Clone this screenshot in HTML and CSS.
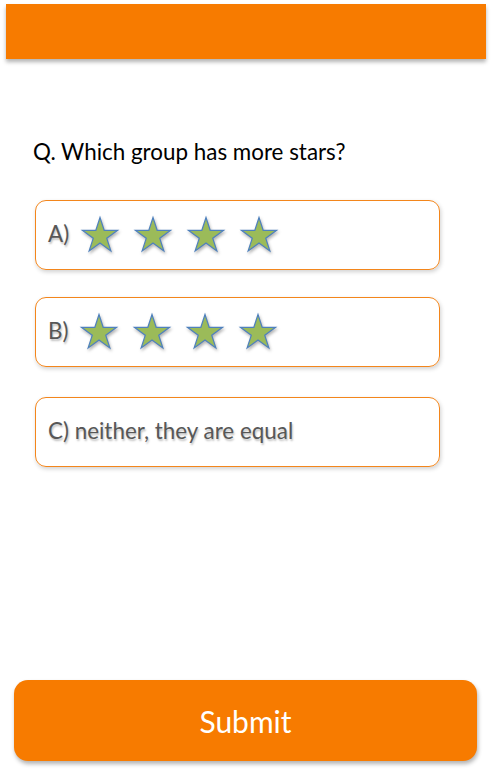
FILE: index.html
```html
<!DOCTYPE html>
<html>
<head>
<meta charset="utf-8">
<link rel="stylesheet" href="styles.css">
</head>
<body>
<div class="page">
  <header class="topbar"></header>
  <p class="question">Q. Which group has more stars?</p>
  <div class="option">
    <span class="label">A)</span>
    <div class="stars">
      <svg class="star" viewBox="0 0 40 40" width="40" height="40"><polygon points="20,1.5 24.16,14.28 37.59,14.28 26.72,22.18 30.87,34.97 20,27.07 9.13,34.97 13.28,22.18 2.41,14.28 15.84,14.28"/></svg>
      <svg class="star" viewBox="0 0 40 40" width="40" height="40"><polygon points="20,1.5 24.16,14.28 37.59,14.28 26.72,22.18 30.87,34.97 20,27.07 9.13,34.97 13.28,22.18 2.41,14.28 15.84,14.28"/></svg>
      <svg class="star" viewBox="0 0 40 40" width="40" height="40"><polygon points="20,1.5 24.16,14.28 37.59,14.28 26.72,22.18 30.87,34.97 20,27.07 9.13,34.97 13.28,22.18 2.41,14.28 15.84,14.28"/></svg>
      <svg class="star" viewBox="0 0 40 40" width="40" height="40"><polygon points="20,1.5 24.16,14.28 37.59,14.28 26.72,22.18 30.87,34.97 20,27.07 9.13,34.97 13.28,22.18 2.41,14.28 15.84,14.28"/></svg>
    </div>
  </div>
  <div class="option option-b">
    <span class="label">B)</span>
    <div class="stars">
      <svg class="star" viewBox="0 0 40 40" width="40" height="40"><polygon points="20,1.5 24.16,14.28 37.59,14.28 26.72,22.18 30.87,34.97 20,27.07 9.13,34.97 13.28,22.18 2.41,14.28 15.84,14.28"/></svg>
      <svg class="star" viewBox="0 0 40 40" width="40" height="40"><polygon points="20,1.5 24.16,14.28 37.59,14.28 26.72,22.18 30.87,34.97 20,27.07 9.13,34.97 13.28,22.18 2.41,14.28 15.84,14.28"/></svg>
      <svg class="star" viewBox="0 0 40 40" width="40" height="40"><polygon points="20,1.5 24.16,14.28 37.59,14.28 26.72,22.18 30.87,34.97 20,27.07 9.13,34.97 13.28,22.18 2.41,14.28 15.84,14.28"/></svg>
      <svg class="star" viewBox="0 0 40 40" width="40" height="40"><polygon points="20,1.5 24.16,14.28 37.59,14.28 26.72,22.18 30.87,34.97 20,27.07 9.13,34.97 13.28,22.18 2.41,14.28 15.84,14.28"/></svg>
    </div>
  </div>
  <div class="option option-c">
    <span class="label">C) neither, they are equal</span>
  </div>
  <button class="submit">Submit</button>
</div>
</body>
</html>
```
FILE: styles.css
```css
html, body {
  margin: 0;
  padding: 0;
  background: #ffffff;
}
body {
  font-family: "Lato", "Open Sans", sans-serif;
}
.page {
  height: 770px;
  display: flex;
  flex-direction: column;
  box-sizing: border-box;
}
.topbar {
  margin: 4px 6px 0 6px;
  height: 55px;
  background: #f77b00;
  box-shadow: 0 3px 4px rgba(0, 0, 0, 0.3);
}
.question {
  margin: 79px 0 0 33px;
  font-size: 22.4px;
  line-height: 28px;
  color: #000000;
}
.option {
  width: 405px;
  height: 70px;
  margin-left: 35px;
  box-sizing: border-box;
  border: 1px solid #f3861c;
  border-radius: 11px;
  box-shadow: 1px 2px 4px rgba(0, 0, 0, 0.18);
  display: flex;
  align-items: center;
  padding-left: 12px;
}
.question + .option {
  margin-top: 34px;
}
.option-b {
  margin-top: 27px;
}
.option-c {
  margin-top: 30px;
}
.label {
  font-size: 22.4px;
  color: #575757;
  text-shadow: 1px 2px 2px rgba(0, 0, 0, 0.25);
  margin-top: -3px;
}
.stars {
  display: flex;
  gap: 13px;
  margin-left: 11px;
  margin-top: 2px;
}
.star {
  display: block;
  overflow: visible;
  filter: drop-shadow(1px 2px 1.5px rgba(0, 0, 0, 0.3));
}
.star polygon {
  fill: #9bbb59;
  stroke: #4f81bd;
  stroke-width: 1.2;
  stroke-linejoin: miter;
}
.submit {
  margin: auto 15px 9px 14px;
  height: 81px;
  border: none;
  border-radius: 14px;
  background: #f77b00;
  color: #ffffff;
  font-family: "Lato", "Open Sans", sans-serif;
  font-size: 30px;
  box-shadow: 1px 3px 4px rgba(0, 0, 0, 0.3);
}
```
